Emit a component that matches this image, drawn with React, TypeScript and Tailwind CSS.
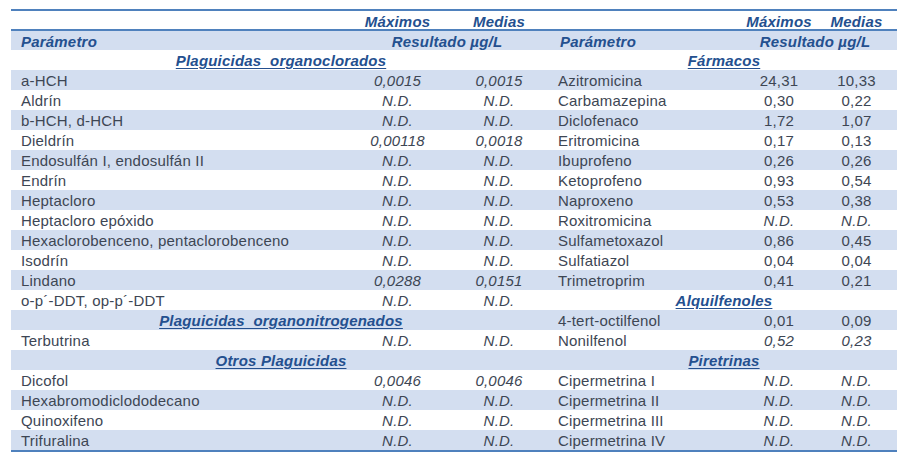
type Cell =
  | { kind: 'data'; name: string; max: string; med: string; italic?: boolean }
  | { kind: 'section'; title: string };

const d = (name: string, max: string, med: string, italic = true): Cell => ({ kind: 'data', name, max, med, italic });
const s = (title: string): Cell => ({ kind: 'section', title });

const left: Cell[] = [
  d('a-HCH', '0,0015', '0,0015'),
  d('Aldrín', 'N.D.', 'N.D.'),
  d('b-HCH, d-HCH', 'N.D.', 'N.D.'),
  d('Dieldrín', '0,00118', '0,0018'),
  d('Endosulfán I, endosulfán II', 'N.D.', 'N.D.'),
  d('Endrín', 'N.D.', 'N.D.'),
  d('Heptacloro', 'N.D.', 'N.D.'),
  d('Heptacloro epóxido', 'N.D.', 'N.D.'),
  d('Hexaclorobenceno, pentaclorobenceno', 'N.D.', 'N.D.'),
  d('Isodrín', 'N.D.', 'N.D.'),
  d('Lindano', '0,0288', '0,0151'),
  d('o-p´-DDT, op-p´-DDT', 'N.D.', 'N.D.'),
  s('Plaguicidas  organonitrogenados'),
  d('Terbutrina', 'N.D.', 'N.D.'),
  s('Otros Plaguicidas'),
  d('Dicofol', '0,0046', '0,0046'),
  d('Hexabromodiclododecano', 'N.D.', 'N.D.'),
  d('Quinoxifeno', 'N.D.', 'N.D.'),
  d('Trifuralina', 'N.D.', 'N.D.'),
];

const right: Cell[] = [
  d('Azitromicina', '24,31', '10,33', false),
  d('Carbamazepina', '0,30', '0,22', false),
  d('Diclofenaco', '1,72', '1,07', false),
  d('Eritromicina', '0,17', '0,13', false),
  d('Ibuprofeno', '0,26', '0,26', false),
  d('Ketoprofeno', '0,93', '0,54', false),
  d('Naproxeno', '0,53', '0,38', false),
  d('Roxitromicina', 'N.D.', 'N.D.'),
  d('Sulfametoxazol', '0,86', '0,45', false),
  d('Sulfatiazol', '0,04', '0,04', false),
  d('Trimetroprim', '0,41', '0,21', false),
  s('Alquilfenoles'),
  d('4-tert-octilfenol', '0,01', '0,09', false),
  d('Nonilfenol', '0,52', '0,23'),
  s('Piretrinas'),
  d('Cipermetrina I', 'N.D.', 'N.D.'),
  d('Cipermetrina II', 'N.D.', 'N.D.'),
  d('Cipermetrina III', 'N.D.', 'N.D.'),
  d('Cipermetrina IV', 'N.D.', 'N.D.'),
];

const grid = 'grid grid-cols-[337px_99px_104px_191px_74px_81px]';

function Section({ title }: { title: string }) {
  return (
    <div className="col-span-3 text-center font-bold italic text-[#24508f] underline underline-offset-2 whitespace-pre">
      {title}
    </div>
  );
}

function Half({ cell, side }: { cell: Cell; side: 'l' | 'r' }) {
  if (cell.kind === 'section') return <Section title={cell.title} />;
  return (
    <>
      <div className={side === 'l' ? 'pl-[10px] whitespace-nowrap' : 'pl-[7px] whitespace-nowrap'}>{cell.name}</div>
      <div className={`text-center ${cell.italic ? 'italic' : ''}`}>{cell.max}</div>
      <div className={`text-center ${cell.italic ? 'italic' : ''}`}>{cell.med}</div>
    </>
  );
}

export default function App() {
  return (
    <div className="w-[907px] h-[465px] bg-white pt-[9px] pl-[11px] font-[family-name:'Liberation_Sans',Arial,sans-serif] text-[15px] tracking-[0.2px] text-[#3d4654]">
      <div className="w-[886px] border-t-2 border-b-2 border-[#4f81bd]">
        {/* header row 1 */}
        <div className={`${grid} h-[18px] items-center font-bold italic text-[#24508f]`}>
          <div />
          <div className="text-center">Máximos</div>
          <div className="text-center">Medias</div>
          <div />
          <div className="text-center">Máximos</div>
          <div className="text-center">Medias</div>
        </div>
        {/* header row 2 */}
        <div className={`${grid} h-[21px] items-center border-t-2 border-[#4f81bd] bg-[#d3def0] font-bold italic text-[#24508f]`}>
          <div className="pl-[10px]">Parámetro</div>
          <div className="col-span-2 text-center pr-[5px]">Resultado µg/L</div>
          <div className="pl-[9px]">Parámetro</div>
          <div className="col-span-2 text-center pr-[9px]">Resultado µg/L</div>
        </div>
        {/* section row */}
        <div className={`${grid} h-[20px] items-center`}>
          <Section title="Plaguicidas  organoclorados" />
          <Section title="Fármacos" />
        </div>
        {left.map((l, i) => (
          <div key={i} className={`${grid} h-[20px] items-center ${i % 2 === 0 ? 'bg-[#d3def0]' : 'bg-white'}`}>
            <Half cell={l} side="l" />
            <Half cell={right[i]} side="r" />
          </div>
        ))}
      </div>
    </div>
  );
}
